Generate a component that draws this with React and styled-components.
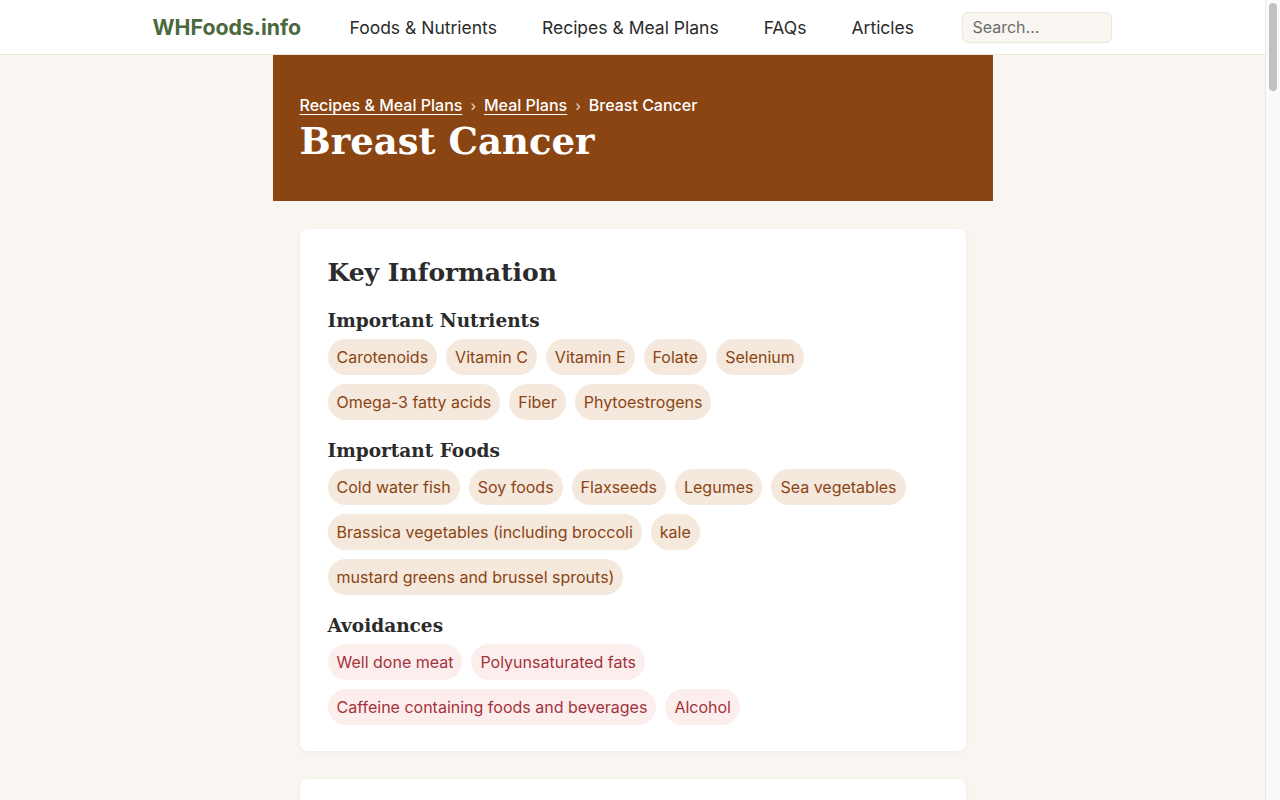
import React from "react";
import styled, { createGlobalStyle } from "styled-components";

const GlobalStyle = createGlobalStyle`
  html, body {
    margin: 0;
    padding: 0;
    background: #f9f6f1;
    font-family: Inter, "Liberation Sans", sans-serif;
    color: #2b2b2b;
  }
  body {
    margin-right: 15px;
  }
`;

/* stand-in for the browser's classic scrollbar in the reference */
const ScrollTrack = styled.div`
  position: fixed;
  top: 0;
  right: 0;
  bottom: 0;
  width: 14px;
  background: #fafafa;
  border-left: 1px solid #e8e8e8;
`;

const ScrollThumb = styled.div`
  position: absolute;
  top: 3px;
  left: 3px;
  width: 8px;
  height: 88px;
  border-radius: 4px;
  background: #c1c1c1;
`;

const Header = styled.header`
  background: #fff;
  border-bottom: 1px solid #ece6dc;
`;

const HeaderInner = styled.div`
  width: 960px;
  margin: 0 auto;
  height: 54px;
  display: flex;
  align-items: center;
  justify-content: space-between;
`;

const Logo = styled.a`
  font-size: 21.3px;
  font-weight: 700;
  color: #4a6a3e;
  text-decoration: none;
`;

const Nav = styled.nav`
  display: flex;
  gap: 45px;
`;

const NavLink = styled.a`
  font-size: 17.5px;
  color: #2b2b2b;
  text-decoration: none;
`;

const Search = styled.input`
  width: 150px;
  height: 31px;
  box-sizing: border-box;
  padding: 0 9px;
  border: 1px solid #ede6da;
  border-radius: 6px;
  background: #f9f6f1;
  font-family: inherit;
  font-size: 16px;
  color: #333;
  &::placeholder {
    color: #6b6b6b;
  }
`;

const Main = styled.main`
  width: 720px;
  margin: 0 auto;
`;

const Hero = styled.section`
  background: #8b4513;
  color: #fff;
  padding: 40px 27px 38px;
`;

const Breadcrumb = styled.div`
  display: flex;
  align-items: center;
  gap: 8px;
  font-size: 16px;
  font-weight: 500;
`;

const Crumb = styled.a`
  color: #fff;
  text-decoration: underline;
  text-underline-offset: 3px;
`;

const Sep = styled.span`
  color: #e5cbb4;
  font-size: 14px;
`;

const Title = styled.h1`
  margin: 4px 0 0;
  font-family: "DejaVu Serif", Georgia, serif;
  font-size: 37px;
  font-weight: 700;
  line-height: 1.2;
`;

const Cards = styled.div`
  padding: 28px 27px 0;
  display: flex;
  flex-direction: column;
  gap: 28px;
`;

const Card = styled.section`
  background: #fff;
  border-radius: 8px;
  box-shadow: 0 1px 4px rgba(120, 90, 50, 0.08);
  padding: 28px 28px 26px;
  min-height: ${(p) => p.$minH || 0}px;
  box-sizing: border-box;
`;

const CardTitle = styled.h2`
  margin: 0 0 19px;
  font-family: "DejaVu Serif", Georgia, serif;
  font-size: 25px;
  font-weight: 700;
  color: #2b2b2b;
  line-height: 1.3;
`;

const SubTitle = styled.h3`
  margin: 0 0 6px;
  font-family: "DejaVu Serif", Georgia, serif;
  font-size: 18.5px;
  font-weight: 700;
  color: #2b2b2b;
  line-height: 1.3;
`;

const Group = styled.div`
  margin-bottom: 19px;
  &:last-child {
    margin-bottom: 0;
  }
`;

const Tags = styled.div`
  display: flex;
  flex-wrap: wrap;
  gap: 9px;
`;

const Tag = styled.span`
  display: inline-flex;
  align-items: center;
  height: 36px;
  padding: 0 9px;
  border-radius: 18px;
  font-size: 16px;
  background: ${(p) => (p.$avoid ? "#fdeeee" : "#f5e8dd")};
  color: ${(p) => (p.$avoid ? "#a3333b" : "#8b4513")};
`;

const groups = [
  {
    title: "Important Nutrients",
    items: [
      "Carotenoids",
      "Vitamin C",
      "Vitamin E",
      "Folate",
      "Selenium",
      "Omega-3 fatty acids",
      "Fiber",
      "Phytoestrogens",
    ],
  },
  {
    title: "Important Foods",
    items: [
      "Cold water fish",
      "Soy foods",
      "Flaxseeds",
      "Legumes",
      "Sea vegetables",
      "Brassica vegetables (including broccoli",
      "kale",
      "mustard greens and brussel sprouts)",
    ],
  },
  {
    title: "Avoidances",
    avoid: true,
    items: [
      "Well done meat",
      "Polyunsaturated fats",
      "Caffeine containing foods and beverages",
      "Alcohol",
    ],
  },
];

const App = () => {
  return (
    <>
      <GlobalStyle />
      <Header>
        <HeaderInner>
          <Logo href="#">WHFoods.info</Logo>
          <Nav>
            <NavLink href="#">Foods &amp; Nutrients</NavLink>
            <NavLink href="#">Recipes &amp; Meal Plans</NavLink>
            <NavLink href="#">FAQs</NavLink>
            <NavLink href="#">Articles</NavLink>
          </Nav>
          <Search placeholder="Search..." />
        </HeaderInner>
      </Header>
      <Main>
        <Hero>
          <Breadcrumb>
            <Crumb href="#">Recipes &amp; Meal Plans</Crumb>
            <Sep>›</Sep>
            <Crumb href="#">Meal Plans</Crumb>
            <Sep>›</Sep>
            <span>Breast Cancer</span>
          </Breadcrumb>
          <Title>Breast Cancer</Title>
        </Hero>
        <Cards>
          <Card>
            <CardTitle>Key Information</CardTitle>
            {groups.map((g) => (
              <Group key={g.title}>
                <SubTitle>{g.title}</SubTitle>
                <Tags>
                  {g.items.map((t) => (
                    <Tag key={t} $avoid={g.avoid}>
                      {t}
                    </Tag>
                  ))}
                </Tags>
              </Group>
            ))}
          </Card>
          <Card $minH={300} />
        </Cards>
      </Main>
      <ScrollTrack>
        <ScrollThumb />
      </ScrollTrack>
    </>
  );
};

export default App;
